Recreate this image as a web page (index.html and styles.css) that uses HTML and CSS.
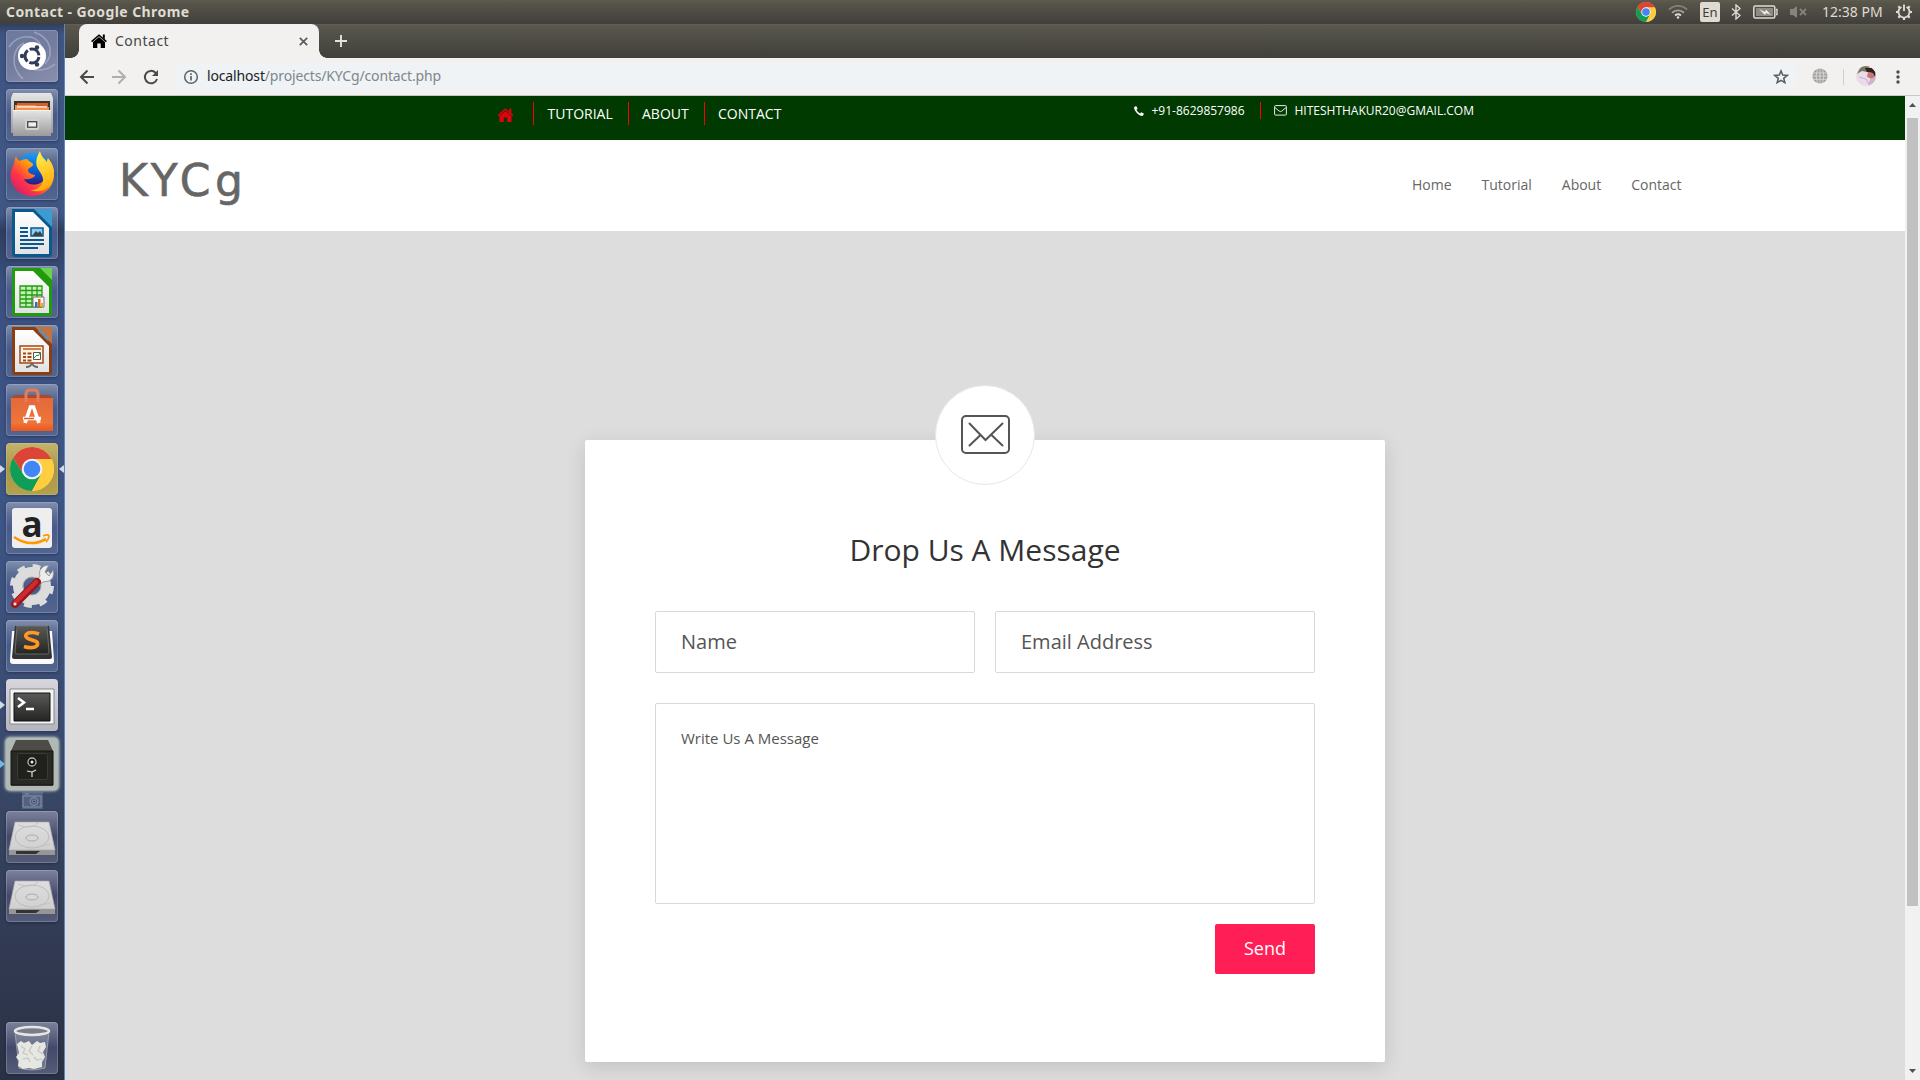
FILE: index.html
```html
<!DOCTYPE html>
<html lang="en">
<head>
<meta charset="utf-8">
<title>Contact</title>
<link rel="stylesheet" href="styles.css">
</head>
<body>
<svg class="defs" width="0" height="0">
  <defs>
    <linearGradient id="metal" x1="0" y1="0" x2="0" y2="1"><stop offset="0" stop-color="#e6e6e6"/><stop offset="1" stop-color="#9a9a9a"/></linearGradient>
    <linearGradient id="paper" x1="0" y1="0" x2="0" y2="1"><stop offset="0" stop-color="#fff"/><stop offset="1" stop-color="#e2e2e2"/></linearGradient>
    <linearGradient id="diskTop" x1="0" y1="0" x2="0" y2="1"><stop offset="0" stop-color="#dedede"/><stop offset="1" stop-color="#d0d0d0"/></linearGradient>
    <linearGradient id="orange" x1="0" y1="0" x2="0" y2="1"><stop offset="0" stop-color="#e2693a"/><stop offset=".75" stop-color="#f07538"/><stop offset="1" stop-color="#e9571f"/></linearGradient>
    <linearGradient id="foxBody" x1="1" y1="0" x2="0" y2="1"><stop offset=".1" stop-color="#ffe226"/><stop offset=".4" stop-color="#ff9a0a"/><stop offset=".65" stop-color="#ff3647"/><stop offset="1" stop-color="#c2137e"/></linearGradient>
    <linearGradient id="foxTail" x1=".3" y1="0" x2=".6" y2="1"><stop offset="0" stop-color="#fff44f"/><stop offset="1" stop-color="#ffa80b"/></linearGradient>
    <linearGradient id="foxGlobe" x1="0" y1="0" x2="0" y2="1"><stop offset="0" stop-color="#1c9cf5"/><stop offset=".6" stop-color="#0b50c8"/><stop offset="1" stop-color="#30106b"/></linearGradient>
    <linearGradient id="dark" x1="0" y1="0" x2="0" y2="1"><stop offset="0" stop-color="#5a5a58"/><stop offset="1" stop-color="#242422"/></linearGradient>
    <symbol id="house" viewBox="0 0 16 14"><path d="M8 2.900 14 8v6H9.700V9.600H6.300V14H2V8z"/><path d="M.6 7.600 8 1.200l7.400 6.400" fill="none" stroke="currentColor" stroke-width="1.500"/><path d="M11.800.6h2v4.600l-2-1.700z"/></symbol>
    <symbol id="chrome" viewBox="0 0 44 44">
      <circle cx="22" cy="22" r="22" fill="#ffcd40"/>
      <path d="M22 12H41.600A22 22 0 0 0 3 11l9 14z" fill="#db4437"/>
      <path d="M3 11A22 22 0 0 0 22 44l9-16.500-9 4.500a10 10 0 0 1-9-5.500z" fill="#0f9d58"/>
      <path d="M22 12h19.600A22 22 0 0 1 22 44l9-16.500z" fill="#ffcd40"/>
      <circle cx="22" cy="22" r="10.300" fill="#f3f3f3"/><circle cx="22" cy="22" r="8.300" fill="#4285f4"/>
    </symbol>
    <symbol id="disk" viewBox="0 0 52 52">
      <path d="M3 39h46v5H3z" fill="#969696"/><path d="M10 40h24l-4 3H10z" fill="#333"/>
      <path d="M9 11h34l6 28H3z" fill="url(#diskTop)" stroke="#aaa" stroke-width=".7"/>
      <ellipse cx="26" cy="26" rx="17" ry="11" fill="none" stroke="#bdbdbd"/><ellipse cx="26" cy="27" rx="6" ry="3" fill="#d8d8d8" stroke="#aaa"/>
      <path d="M12 14q14 5 20-2M32 36l12-3" fill="none" stroke="#c2c2c2"/>
    </symbol>
  </defs>
</svg>

<header class="panel">
  <span class="panel-title">Contact - Google Chrome</span>
  <div class="indicators">
    <svg width="20" height="20"><use href="#chrome"/></svg>
    <svg class="i-wifi" width="20" height="14" viewBox="0 0 20 14" fill="none" stroke-width="1.900"><path d="M1 4.500a13 13 0 0 1 18 0" stroke="#83817a"/><path d="M4 7.700a9 9 0 0 1 12 0" stroke="#a5a39b"/><path d="M7 10.400a5 5 0 0 1 6 0" stroke="#dfdbd2"/><circle cx="10" cy="12.500" r="1.300" fill="#dfdbd2"/></svg>
    <span class="lang">En</span>
    <svg class="i-bt" width="10" height="16" viewBox="0 0 10 16" fill="none" stroke="#dfdbd2" stroke-width="1.400"><path d="m1 4.500 8 7L5 15V1l4 3.500-8 7"/></svg>
    <svg class="i-bat" width="25" height="14" viewBox="0 0 25 14"><rect x=".8" y="1" width="21" height="12" rx="1.500" fill="none" stroke="#dfdbd2" stroke-width="1.500"/><path d="M3 3h17v8H3z" fill="#8c8a84"/><path d="M23 4.500h1v5h-1" fill="none" stroke="#dfdbd2" stroke-width="1.300"/><path d="m6 4 6 3 1-2.500 5 5.500-5-2-1 2z" fill="#f0ede6"/></svg>
    <svg class="i-vol" width="18" height="14" viewBox="0 0 18 14" fill="#85837d"><path d="M1 4h3l4-3v12L4 10H1z"/><path d="m11 4 6 6m0-6-6 6" stroke="#85837d" stroke-width="1.800"/></svg>
    <span class="clock">12:38 PM</span>
    <svg class="i-gear" width="18" height="18" viewBox="0 0 18 18" fill="none" stroke="#dfdbd2"><path d="M6.500 4a5.600 5.600 0 1 0 5 0M9 1.500V8" stroke-width="1.900"/><path d="M1 9h2.500m11 0H17M9 14.500V17M3.300 3.300l1.700 1.700m8 8 1.700 1.700m0-11.400L13 5M5 13l-1.700 1.700" stroke-width="2.200"/></svg>
  </div>
</header>

<div class="desktop">
<aside class="launcher">
  <div class="tile dash"><svg viewBox="0 0 52 52"><g fill="none" stroke="#cbd0df" stroke-opacity=".45" stroke-width="1.500"><path d="M3 17C12 3 31 4 35 16M28 2c18 6 20 22 11 32M49 34c-12 10-30 7-33-5M17 49C3 36 7 18 18 13"/></g><circle cx="26" cy="26" r="14" fill="#fff"/><circle cx="26" cy="26" r="7" fill="none" stroke="#323c58" stroke-width="3" stroke-dasharray="12.660 2" stroke-dashoffset="-1"/><g fill="#323c58"><circle cx="16" cy="26" r="2.200"/><circle cx="31" cy="17.500" r="2.200"/><circle cx="31" cy="34.500" r="2.200"/></g></svg></div>
  <div class="tile"><svg viewBox="0 0 52 52"><path d="M7 4h38l2 5v35H5V9z" fill="url(#metal)"/><path d="M8 12h36v12H8z" fill="#39352f"/><path d="M11 14h31v8H11z" fill="#d4602e"/><path d="M9 16h20l2 2h12v5H9z" fill="#f0924e"/><path d="M11 17.300h30v1.200H11z" fill="#fff"/><path d="M7 21h38v26H7z" fill="url(#metal)"/><path d="M7 21.500h38" stroke="#f3f3f3"/><rect x="19" y="30" width="14" height="11" rx="2" fill="#d2d2d2"/><rect x="21.700" y="32.700" width="9" height="5.500" fill="#eee" stroke="#474747" stroke-width="1.300"/></svg></div>
  <div class="tile"><svg viewBox="0 0 52 52"><circle cx="27" cy="22" r="17" fill="url(#foxGlobe)"/><path d="M10 8c-2 4-1 7-3 10-7 12 1 30 19 30 17 0 25-15 21-28-1-5-4-7-5-8 2 10 0 17-6 22-7 5-16 2-18-3 5 1 9-1 11-3 1-2-7-1-7-6 0-2 3-2 5-5 1-2-4-3-6-6-4 0-6 1-7 2-2-1-3-2-4-5z" fill="url(#foxBody)"/><path d="M34 3c-4 7-5 12-2 18 3 5 7 9 4 15-3 5-7 6-12 6 15 5 24-5 24-19-1-7-4-10-6-13-1 2-1 3-1 4-2-3-6-5-7-11z" fill="url(#foxTail)"/></svg></div>
  <div class="tile"><svg viewBox="0 0 52 52"><path d="M6 2h39a1 1 0 0 1 1 1v44q0 3-3 3H9q-3 0-3-3z" fill="#0b588f"/><path d="M28 2h18v18z" fill="#3c9bd0"/><path d="M9 5h18l16 16v26H9z" fill="url(#paper)"/><path d="M14 21h8m-8 4h8m-8 4h8m-8 4h24m-24 4h24m-24 4h18" stroke="#0b588f" stroke-width="2"/><path d="M25 21h12v8H25z" fill="#8bcdf0" stroke="#0b588f" stroke-width="1.500"/><path d="m26 29 4-5 2 2 2-2 3 5z" fill="#354550"/></svg></div>
  <div class="tile"><svg viewBox="0 0 52 52"><path d="M6 2h39a1 1 0 0 1 1 1v44q0 3-3 3H9q-3 0-3-3z" fill="#219b0d"/><path d="M34 2h12v12z" fill="#69d34c"/><path d="M9 5h18l16 16v26H9z" fill="url(#paper)"/><path d="M14 20h22v21H14z" fill="#c1f2b0"/><path d="M14 20h22v21H14zM14 24.500h22M14 29h22m-22 4h22m-22 4h22M20 20v21m6-21v21m5-21v21" fill="none" stroke="#259b14" stroke-width="1.300"/><path d="M27 31h11v10H27z" fill="#f4f4f4" stroke="#777"/><path d="M29 36h2.500v5H29z" fill="#2272b8"/><path d="M32 33h2.500v8H32z" fill="#e3611c"/><path d="M35 37h2v4h-2z" fill="#e5b500"/></svg></div>
  <div class="tile"><svg viewBox="0 0 52 52"><path d="M6 2h39a1 1 0 0 1 1 1v44q0 3-3 3H9q-3 0-3-3z" fill="#8d3d12"/><path d="M29 2h17v17z" fill="#c5733d"/><path d="m33 5 10 10" stroke="#658db0" stroke-width="3"/><path d="M9 5h18l16 16v26H9z" fill="url(#paper)"/><path d="M14 21h23v17H14z" fill="#fff4ea" stroke="#a54415" stroke-width="1.500"/><path d="M17 24h18" stroke="#db7b3c" stroke-width="2"/><path d="M17 28.500h3m-3 3.500h3m-3 3.500h3m1.500-7h4m-4 3.500h4m-4 3.500h4" stroke="#a54415" stroke-width="2"/><path d="M27.500 27.500h7v7h-7z" fill="#fff" stroke="#555"/><path d="m28 33 3-3 1 1 2-3" fill="none" stroke="#169c37"/><path d="M20 42q5 0 6-4 1 4 6 4" fill="none" stroke="#666" stroke-width="1.800"/></svg></div>
  <div class="tile"><svg viewBox="0 0 52 52"><path d="m8 11-3 4h42l-3-4z" fill="#a94a2d"/><path d="M5 14h42v33H5z" fill="url(#orange)"/><path d="M20 18V10q0-4 4-4h4q4 0 4 4v8" fill="none" stroke="#e57b57" stroke-width="3"/><path d="m19 39 5.500-16h3L33 39" fill="none" stroke="#fff" stroke-width="3.600"/><path d="M17 34.500h18" stroke="#fff" stroke-width="3.500"/><path d="M18 34.500h10" stroke="#e75b24" stroke-width="1.500"/></svg></div>
  <div class="tile active running"><svg viewBox="0 0 52 52"><use href="#chrome" x="4" y="4" width="44" height="44"/></svg></div>
  <div class="tile amazon"><span class="amazon-a">a</span><svg viewBox="0 0 52 52"><path d="M8 35q16 11 32 2" fill="none" stroke="#f90" stroke-width="2.600"/><path d="M37 34q5-2 6 0 0 3-3 6" fill="none" stroke="#f90" stroke-width="1.800"/></svg></div>
  <div class="tile"><svg viewBox="0 0 52 52"><circle cx="26" cy="25" r="14" fill="none" stroke="#dcdcdc" stroke-width="10"/><circle cx="26" cy="25" r="19.500" fill="none" stroke="#dcdcdc" stroke-width="5" stroke-dasharray="7.660 7.660"/><circle cx="26" cy="25" r="9" fill="none" stroke="#a5a5a5"/><path d="m31 19 3-4q-2-6 4-10l5-1-4 7 4 4 4-6q2 8-4 11l-6 1-4 4z" fill="#ececec" stroke="#8a8a8a" stroke-width=".8"/><path d="M9 43 31 21" stroke="#9b161a" stroke-width="8" stroke-linecap="round"/><path d="m9 42 21-21" stroke="#cc2b31" stroke-width="4.500" stroke-linecap="round"/><circle cx="9" cy="43" r="1.500" fill="#eee"/></svg></div>
  <div class="tile"><svg viewBox="0 0 52 52"><path d="M6 11h40l2 30q0 3-3 3H7q-3 0-3-3z" fill="#fafafa"/><path d="M9 6h34l3 31q0 2-2 2H8q-2 0-2-2z" fill="#333"/><path d="M11 6h30l2 26q0 2-2 2H11q-2 0-2-2z" fill="url(#dark)" stroke="#777" stroke-width=".8"/><path d="M33 14q-6-2.500-11-1c-4 2-2 5 1 6l6 2c3 1 4 4 0 6q-5 1.500-11-.500" fill="none" stroke="#ff9826" stroke-width="3.600"/></svg></div>
  <div class="tile light running"><svg viewBox="0 0 52 52"><path d="M4 10h44v35H4z" fill="#f5f5f5" stroke="#888"/><path d="M8 14h36v28H8z" fill="url(#dark)" stroke="#111"/><path d="m12 19 6 4.500-6 4.500M20 30h8" fill="none" stroke="#fff" stroke-width="2.600"/></svg></div>
  <div class="tile glow open"><svg viewBox="0 0 52 52"><path d="m10 2-5 11v35h42V13L42 2z" fill="#4c4b47"/><path d="M5 13h42v34H5z" fill="#282825" stroke="#151513"/><rect x="11.500" y="15.500" width="30" height="26" rx="2" fill="#20201d" stroke="#3b3a35"/><circle cx="26" cy="24" r="4" fill="#111" stroke="#b5b5b5" stroke-width="1.300"/><circle cx="26" cy="24" r="1.500" fill="#eee"/><path d="M26 34v5M26 34l-5-1m5 1 4-2" stroke="#ddd" stroke-width="1.200"/></svg></div>
  <div class="peek"><svg width="20" height="15" viewBox="0 0 20 15" fill="none" stroke="#8692ac"><path d="M1 3h18v11H1zM3 1h4"/><circle cx="12" cy="8.500" r="4"/><circle cx="12" cy="8.500" r="1.500" fill="#34435f"/></svg></div>
  <div class="tile drive"><svg viewBox="0 0 52 52"><use href="#disk"/></svg></div>
  <div class="tile drive"><svg viewBox="0 0 52 52"><use href="#disk"/></svg></div>
  <div class="tile drive trash"><svg viewBox="0 0 52 52"><path d="m9 10 4 36q13 4 26 0l4-36z" fill="#aeb5be" fill-opacity=".35" stroke="#a5abb5" stroke-width=".8"/><g fill="#e6e7e3"><path d="m11 22 4-3 3 2 5-2 3 4 5-4 3 2 5-1 1 5-3 5 2 5-3 5v5l-8 2-5-1-6 1-5-3 1-5-3-4 3-4z"/><path d="m15 24 4 3-2 4 5 2m4-9-3 5 4 4m7-9-2 5 5 3m-20 5 5-1 2 4m4-5 3 3 5-1" fill="none" stroke="#c3c6c1" stroke-width="1.200"/></g><ellipse cx="26" cy="9" rx="17" ry="4" fill="#777e88" stroke="#e5e6e4" stroke-width="2.500"/></svg></div>
</aside>

<div class="browser">
  <div class="tabstrip">
    <div class="tab">
      <svg class="favicon" width="16" height="14"><use href="#house"/></svg>
      <span class="tab-title">Contact</span>
      <svg class="close" width="9" height="9" viewBox="0 0 9 9" stroke="#5b5b5b" stroke-width="1.700"><path d="m.8.800 7.400 7.400m0-7.400L.8 8.200"/></svg>
    </div>
    <svg class="newtab" width="12" height="12" viewBox="0 0 12 12" stroke="#e4e2dd" stroke-width="1.900"><path d="M6 0v12M0 6h12"/></svg>
  </div>
  <div class="toolbar">
    <svg width="16" height="16" viewBox="0 0 16 16" fill="none" stroke="#4a4a4a" stroke-width="2"><path d="M15 8H2.500M8.500 1.500 2 8l6.500 6.500"/></svg>
    <svg width="16" height="16" viewBox="0 0 16 16" fill="none" stroke="#b0afae" stroke-width="2"><path d="M1 8h12.500M7.500 1.500 14 8l-6.500 6.500"/></svg>
    <svg width="16" height="16" viewBox="0 0 16 16" fill="none" stroke="#4a4a4a" stroke-width="2"><path d="M14 10a6.200 6.200 0 1 1-1.500-6.300L14 5.300"/><path d="M15 1v6H9z" fill="#4a4a4a" stroke="none"/></svg>
    <div class="omnibox">
      <svg width="16" height="16" viewBox="0 0 16 16" fill="none" stroke="#5f6368"><circle cx="8" cy="8" r="6.300" stroke-width="1.500"/><path d="M8 7v4.500M8 4.200v1.700" stroke-width="1.700"/></svg>
      <span class="url"><b>localhost</b>/projects/KYCg/contact.php</span>
      <svg width="16" height="16" viewBox="0 0 16 16" fill="none" stroke="#5a5d61" stroke-width="1.500"><path d="m8 1.900 1.700 4.200 4.500.3-3.500 2.900 1.200 4.400L8 11.300l-3.900 2.400 1.200-4.400-3.500-2.900 4.500-.3z"/></svg>
    </div>
    <svg class="globe" width="16" height="16" viewBox="0 0 16 16"><circle cx="8" cy="8" r="7.600" fill="#a0a0a0"/><path d="M1 5h14M0 8h16M1 11.300h14M8 0v16M5.500 1q-3 7 0 14M10.500 1q3 7 0 14" fill="none" stroke="#e2e1e0" stroke-width=".8"/></svg>
    <span class="sep"></span>
    <svg class="avatar" width="20" height="20" viewBox="0 0 20 20"><clipPath id="round"><circle cx="10" cy="10" r="10"/></clipPath><g clip-path="url(#round)"><path d="M0 0h20v20H0z" fill="#e9dbe9"/><path d="M5 0h9l-3 6-5-1-5 3z" fill="#77785f"/><path d="m9 2 7 0 4 4-1 5-3-4-5-1z" fill="#33201f"/><path d="m12 6 5 1 2 4-3 2-5-2z" fill="#c7776f"/><path d="m14 13 6-2v9h-8z" fill="#cab5cf"/><path d="m3 11 7 2 3 5" fill="none" stroke="#cfacc9"/></g></svg>
    <svg class="dots" width="4" height="14" viewBox="0 0 4 14" fill="#4d4d4d"><circle cx="2" cy="2" r="1.700"/><circle cx="2" cy="7" r="1.700"/><circle cx="2" cy="12" r="1.700"/></svg>
  </div>

  <div class="viewport">
    <main class="page">
      <div class="topbar">
        <ul class="quick">
          <li class="q-home"><svg width="17" height="14" viewBox="0 0 16 14"><use href="#house"/></svg></li>
          <li class="q-tut">TUTORIAL</li>
          <li class="q-about">ABOUT</li>
          <li>CONTACT</li>
        </ul>
        <ul class="reach">
          <li class="r-phone"><svg width="10" height="10" viewBox="0 0 10 10" fill="#fff"><path d="M0 1.600Q1.200-.2 2.400.3l1.200 2.500-1.200 1q1 2.400 3.700 3.700l1.100-1.200 2.500 1.300q.4 1.300-1.400 2.300-2.300.3-5.300-2.600Q0 4.500 0 1.600z"/></svg>+91-8629857986</li>
          <li class="r-mail"><svg width="13" height="11" viewBox="0 0 13 11" fill="none" stroke="#e6eee6"><rect x=".6" y=".6" width="11.800" height="9.500" rx="1"/><path d="m1 2.600 4.300 3.600q1.200.8 2.400 0L12 2.600"/></svg>HITESHTHAKUR20@GMAIL.COM</li>
        </ul>
      </div>
      <div class="masthead">
        <div class="logo">KYCg</div>
        <nav><a>Home</a><a>Tutorial</a><a>About</a><a>Contact</a></nav>
      </div>
      <section class="stage">
        <form class="card">
          <div class="badge"><svg width="50" height="40" viewBox="0 0 50 40" fill="none" stroke="#555" stroke-width="2" stroke-linecap="round"><rect x="2" y="1" width="47" height="37" rx="4"/><path d="m9.500 8.500 16 16.500 17-16.500M9.500 30.500 20 20.500M42.500 30.500 32 20.500"/></svg></div>
          <h1>Drop Us A Message</h1>
          <div class="pair"><input placeholder="Name"><input placeholder="Email Address"></div>
          <textarea placeholder="Write Us A Message"></textarea>
          <button type="button">Send</button>
        </form>
      </section>
    </main>
    <div class="scrollbar">
      <svg width="7" height="4" viewBox="0 0 7 4" fill="#505050"><path d="M3.500 0 7 4H0z"/></svg>
      <div class="thumb"></div>
      <svg class="down" width="7" height="4" viewBox="0 0 7 4" fill="#505050"><path d="M3.500 4 7 0H0z"/></svg>
    </div>
  </div>
</div>
</div>
</body>
</html>
```

FILE: styles.css
```css
* { box-sizing: border-box; }
body { margin: 0; width: 1920px; height: 1080px; overflow: hidden; display: flex; flex-direction: column; font-family: "Open Sans", sans-serif; }
ul { list-style: none; margin: 0; padding: 0; display: flex; }
svg { display: block; flex: none; }
.defs { position: absolute; }

/* desktop panel */
.panel { height: 24px; flex: none; display: flex; justify-content: space-between; align-items: center; padding: 0 7px 0 6px; color: #dfdbd2; background: linear-gradient(#5e5b50 0, #57544a 3px, #403f3a); font-family: "Noto Sans", sans-serif; }
.panel-title { font-size: 14px; font-weight: 700; letter-spacing: .42px; line-height: 24px; }
.indicators { display: flex; align-items: center; }
.i-wifi { margin-left: 12px; }
.lang { width: 20px; height: 20px; margin-left: 12px; border-radius: 2px; background: #dfdbd2; color: #3f3e39; font-size: 13px; line-height: 20px; text-align: center; }
.i-bt { margin-left: 11px; }
.i-bat { margin-left: 12px; }
.i-vol { margin-left: 11px; }
.clock { width: 62px; margin-left: 15px; font-size: 14px; line-height: 24px; white-space: nowrap; }
.i-gear { margin-left: 11px; }

.desktop { flex: 1; min-height: 0; display: flex; }

/* launcher */
.launcher { width: 65px; flex: none; display: flex; flex-direction: column; align-items: center; padding-top: 6px; border-right: 1px solid #6285bd; background: linear-gradient(#2e405f 0, #3f5581 10px, #405786 190px, #2f3e5e 206px, #3a5080 260px, #3d5585 500px, #3b4b6e 700px, #343f59 860px, #2b3145); }
.tile { position: relative; width: 52px; height: 52px; flex: none; margin-bottom: 7px; border-radius: 4px; background: linear-gradient(#8290af 0, #5d6f96 12px, #46598a 26px, #54668e); box-shadow: inset 0 0 0 1px rgba(205,216,240,.25), 0 1px 3px rgba(15,25,50,.45); }
.tile svg { width: 52px; height: 52px; }
.dash { background: linear-gradient(150deg, #6c799d, #747da0 50%, #8b8fac); }
.active { background: linear-gradient(#c4b46c, #a8974a 50%, #b3a14c); }
.light { background: linear-gradient(#d6d6dc, #b4b5bd); }
.glow { background: #b1b9b4; box-shadow: 0 0 3px 1px #cfd8d1; }
.drive { background: linear-gradient(#7c829a, #43496a 50%, #555c76); }
.running::before, .open::before { content: ""; position: absolute; left: -6px; top: 22px; border: solid transparent; border-width: 4px 0 4px 5px; border-left-color: #d5dbe5; }
.open::before { border-left-color: #6fb9e8; }
.active::after { content: ""; position: absolute; right: -6px; top: 22px; border: solid transparent; border-width: 4px 5px 4px 0; border-right-color: #d5dbe5; }
.amazon { display: grid; }
.amazon > * { grid-area: 1 / 1; }
.amazon-a { width: 40px; height: 40px; margin: 6px; border-radius: 3px; background: #eee; color: #222; font-size: 35px; font-weight: 700; line-height: 31px; text-align: center; }
.amazon svg { position: relative; }
.peek { width: 21px; height: 17px; margin: -5px 0 2px; padding-top: 1px; background: #53617f; flex: none; }
.trash { margin-top: auto; margin-bottom: 6px; }

/* browser frame */
.browser { flex: 1; min-width: 0; display: flex; flex-direction: column; }
.tabstrip { height: 34px; flex: none; display: flex; align-items: center; padding-left: 14px; background: linear-gradient(#69665a 0, #5a584e 1px, #403f3a); }
.tab { position: relative; width: 240px; height: 34px; padding: 0 12px; display: flex; align-items: center; border-radius: 8px 8px 0 0; background: #f2f1f0; }
.tab::before, .tab::after { content: ""; position: absolute; bottom: 0; width: 8px; height: 8px; }
.tab::before { left: -8px; background: radial-gradient(circle at 0 0, transparent 7.5px, #f2f1f0 8px); }
.tab::after { right: -8px; background: radial-gradient(circle at 100% 0, transparent 7.5px, #f2f1f0 8px); }
.tab-title { flex: 1; margin-left: 8px; padding-bottom: 2px; font: 14px "Noto Sans", sans-serif; letter-spacing: .5px; color: #454545; }
.close { margin-right: -1px; }
.newtab { margin-left: 16px; }
.toolbar { height: 38px; flex: none; display: flex; align-items: center; gap: 16px; padding-left: 14px; background: #f2f1f0; border-bottom: 1px solid #c9c8c7; }
.omnibox { height: 30px; width: 1624px; margin-left: -1px; display: flex; align-items: center; padding: 0 9px; border-radius: 15px; background: #eff3f5; }
.url { flex: 1; margin-left: 8px; padding-bottom: 2px; font: 14px "Noto Sans", sans-serif; letter-spacing: -.15px; color: #80868b; }
.url b { font-weight: 400; color: #202124; }
.globe { margin: 0 0 1px -2px; }
.sep { width: 1px; height: 16px; margin-left: -1px; background: #cfcecd; }
.avatar { margin: 0 0 1px -4px; }
.dots { margin-left: 4px; }

/* page */
.viewport { flex: 1; min-height: 0; display: flex; }
.page { flex: 1; min-width: 0; display: flex; flex-direction: column; overflow: hidden; background: #fff; }
.topbar { height: 44px; flex: none; display: flex; justify-content: space-between; padding: 6px 431px 0 432px; background: #003a00; color: #fff; }
.quick { font-size: 14px; line-height: 23px; }
.quick li { height: 23px; padding-left: 13px; }
.quick .q-home { width: 37px; padding: 6px 0 0; border-right: 1px solid #f00; color: #e3000f; fill: #e3000f; }
.quick .q-tut { width: 95px; padding-left: 13.5px; border-right: 1px solid #f00; }
.q-about { width: 76px; border-right: 1px solid #f00; }
.reach { font-size: 12px; line-height: 17px; }
.reach li { display: flex; align-items: center; height: 17px; white-space: nowrap; }
.r-phone { width: 127px; gap: 8px; border-right: 1px solid #f00; }
.r-mail { padding-left: 13px; gap: 8px; }
.masthead { height: 91px; flex: none; display: flex; justify-content: space-between; padding: 0 223.5px 0 54px; }
.logo { font: 44px/82px "DejaVu Sans", sans-serif; letter-spacing: 4.5px; color: #666; -webkit-text-stroke: .6px #666; }
nav { display: flex; gap: 30px; font-size: 14px; line-height: 90px; color: #666; }
.stage { flex: 1; min-height: 0; background: #ddd; padding-top: 209px; }
.card { position: relative; width: 800px; height: 622px; margin: 0 auto; padding: 85px 70px 0; display: flex; flex-direction: column; border-radius: 2px; background: #fff; box-shadow: 0 5px 20px rgba(0,0,0,.13); }
.badge { position: absolute; left: 350px; top: -55px; width: 100px; height: 100px; display: flex; align-items: center; justify-content: center; border: 1px solid #e7e7e7; border-radius: 50%; background: #fff; }
h1 { margin: 0 0 36px; font-size: 30px; line-height: 50px; font-weight: 400; color: #333; text-align: center; }
.pair { display: flex; gap: 20px; margin-bottom: 30px; }
input, textarea { display: block; width: 100%; margin: 0; border: 1px solid #d9d9d9; border-radius: 2px; outline: 0; background: #fff; resize: none; }
input { height: 62px; padding: 0 25px 2px; font: 20px "Open Sans", sans-serif; }
textarea { height: 201px; padding: 24px 25px; font: 15px/20px "Open Sans", sans-serif; }
::placeholder { color: #555; opacity: 1; }
button { align-self: flex-end; width: 100px; height: 50px; margin-top: 20px; padding: 0 0 2px; border: 0; border-radius: 2px; background: #ff1e56; color: #fff; font: 18px "Open Sans", sans-serif; }
.scrollbar { width: 15px; flex: none; display: flex; flex-direction: column; align-items: center; padding: 7px 0; background: #f1f1f1; }
.thumb { width: 11px; height: 788px; margin-top: 11px; background: #c1c1c1; }
.down { margin-top: auto; }
```
